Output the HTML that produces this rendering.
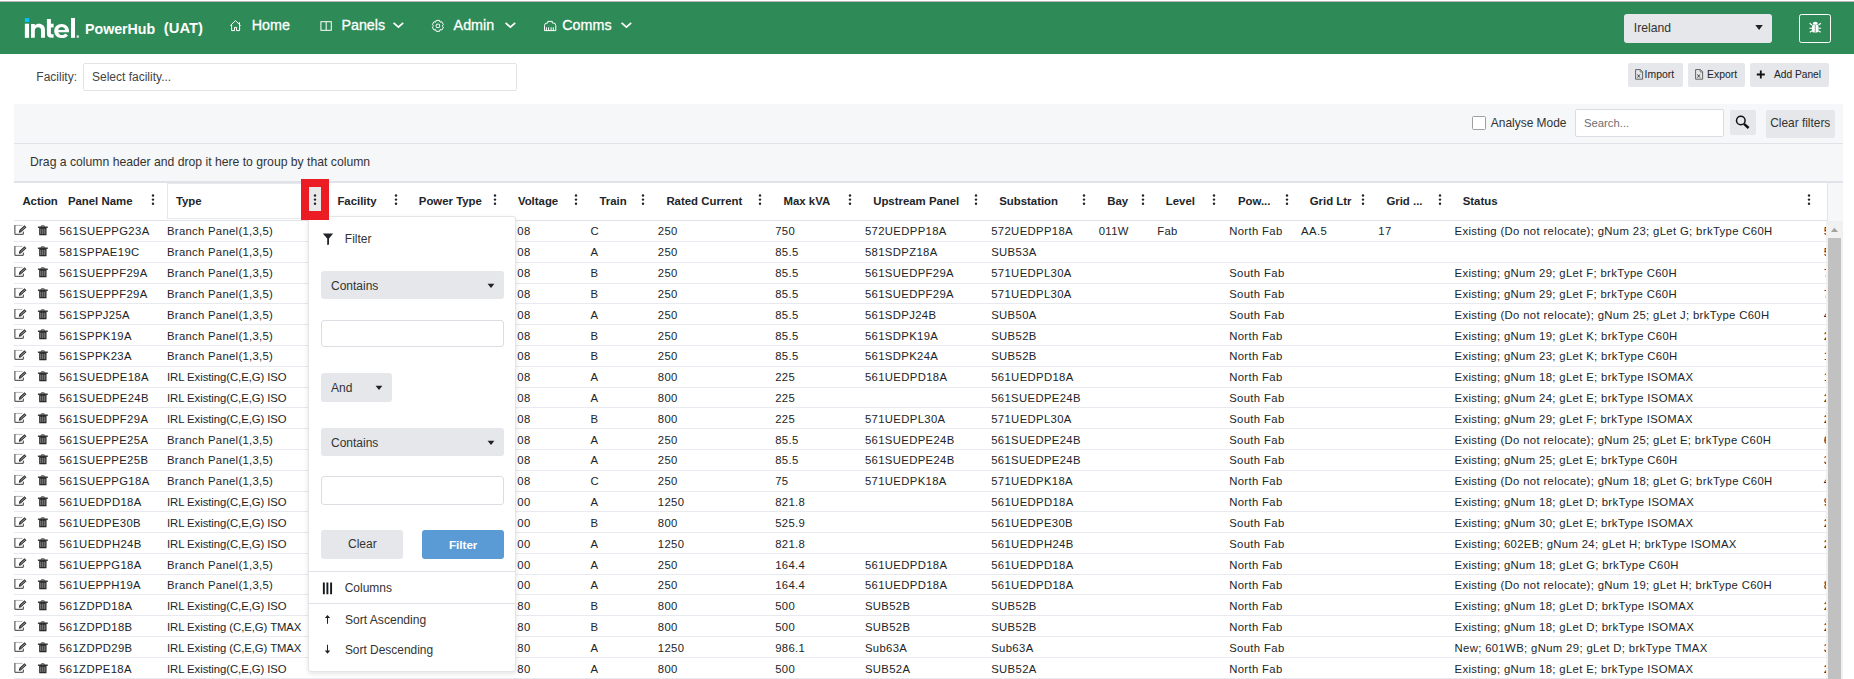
<!DOCTYPE html>
<html><head><meta charset="utf-8"><style>
html,body{margin:0;padding:0;width:1854px;height:679px;overflow:hidden;background:#fff;font-family:"Liberation Sans",sans-serif;}
.t{position:absolute;white-space:nowrap;line-height:normal;}
.r{position:absolute;}
svg.r{overflow:visible}
</style></head><body>
<div class="r" style="left:0.00px;top:0.00px;width:1854.00px;height:1.00px;background:#fff"></div>
<div class="r" style="left:0.00px;top:1.00px;width:1854.00px;height:1.00px;background:#b9b4b7"></div>
<div class="r" style="left:0.00px;top:2.00px;width:1854.00px;height:51.50px;background:#2e8b57"></div>
<svg class="r" style="left:20px;top:12px" width="64" height="30" viewBox="0 0 64 30"><rect x="4.86" y="6.18" width="4.19" height="3.76" fill="#00c7fd"/><rect x="4.86" y="11.7" width="4.19" height="14.14" fill="#fff"/><path d="M11 25.84 V12 H14.8 V13.4 C15.7 12.3 17.1 11.7 18.7 11.7 C22.4 11.7 24.96 13.9 24.96 17.8 V25.84 H21 V18.6 C21 16.4 20 15.3 18.1 15.3 C16.1 15.3 14.8 16.7 14.8 18.9 V25.84 Z" fill="#fff"/><path d="M26.9 7.07 H30.9 V11.7 H33.6 V15.4 H30.9 V21.2 C30.9 22 31.3 22.3 32.2 22.3 H33.6 V25.84 H31.8 C28.4 25.84 26.9 24.4 26.9 21.3 Z" fill="#fff"/><path fill-rule="evenodd" d="M49 20.3 H38.3 C38.7 22.2 40.1 23.1 41.9 23.1 C43.3 23.1 44.4 22.6 45.2 21.6 L48.1 23.5 C46.8 25.1 44.6 26.06 41.9 26.06 C37.3 26.06 34.2 23.2 34.2 19 C34.2 14.8 37.3 11.9 41.6 11.9 C45.9 11.9 49 14.8 49 19 Z M38.3 17.9 H45.1 C44.7 16.1 43.4 15.1 41.7 15.1 C40 15.1 38.7 16.1 38.3 17.9 Z" fill="#fff"/><rect x="51" y="5.96" width="4" height="19.88" fill="#fff"/><rect x="56.6" y="23.3" width="2.3" height="2.5" fill="#cfe3d6"/></svg>
<div class="t" style="left:85.00px;top:20.54px;font-size:14.2px;font-weight:700;color:#fff;">PowerHub</div>
<div class="t" style="left:163.80px;top:20.20px;font-size:14.8px;font-weight:700;color:#fff;">(UAT)</div>
<div class="t" style="left:251.80px;top:17.05px;font-size:14.3px;font-weight:400;color:#fff;-webkit-text-stroke:0.3px #fff">Home</div>
<svg class="r" style="left:226px;top:16px" width="20" height="20"><path d="M4.3 9.6 L9.4 4.6 L14.6 9.6 M5.6 8.4 V14.6 H8.5 V11.4 H10.5 V14.6 H13.6 V8.4 M13.5 8 V6.2" stroke="#fff" fill="none" stroke-width="1" stroke-linejoin="round"/></svg>
<div class="t" style="left:341.40px;top:17.05px;font-size:14.3px;font-weight:400;color:#fff;-webkit-text-stroke:0.3px #fff">Panels</div>
<svg class="r" style="left:316px;top:16px" width="20" height="20"><rect x="4.9" y="5.7" width="10.4" height="8.6" stroke="#fff" fill="none" stroke-width="1"/><path d="M10.2 5.7 V14.3" stroke="#fff" fill="none" stroke-width="1"/></svg>
<div class="t" style="left:453.60px;top:17.05px;font-size:14.3px;font-weight:400;color:#fff;-webkit-text-stroke:0.3px #fff">Admin</div>
<svg class="r" style="left:428px;top:16px" width="20" height="20"><path d="M7.73 6.14 L8.19 4.42 L11.55 4.42 L12.01 6.14 L12.03 6.15 L13.74 5.69 L15.43 8.61 L14.17 9.85 L14.17 9.89 L15.43 11.13 L13.74 14.05 L12.03 13.59 L12.01 13.60 L11.55 15.32 L8.19 15.32 L7.73 13.60 L7.71 13.59 L6.00 14.05 L4.31 11.13 L5.57 9.89 L5.57 9.85 L4.31 8.61 L6.00 5.69 L7.71 6.15 Z" stroke="#fff" fill="none" stroke-width="1" stroke-linejoin="round"/><rect x="8.2" y="8.2" width="3.4" height="3.4" rx="0.8" stroke="#fff" fill="none" stroke-width="1"/></svg>
<div class="t" style="left:562.30px;top:17.05px;font-size:14.3px;font-weight:400;color:#fff;-webkit-text-stroke:0.3px #fff">Comms</div>
<svg class="r" style="left:540px;top:16px" width="20" height="20"><path d="M4.5 14.6 V9.6 Q4.5 7 7.1 7 H7.8 V5.4 H12.3 V7 H13.2 Q15.8 7 15.8 9.6 V14.6 Z M6.4 11.3 V14.6 M8.6 11.3 V14.6 M11.1 11.3 V14.6 M13.3 11.3 V14.6" stroke="#fff" fill="none" stroke-width="1"/></svg>
<svg class="r" style="left:391.6px;top:20px" width="14" height="10"><path d="M1.6 2.8 L6.4 7.2 L11.2 2.8" stroke="#fff" stroke-width="1.7" fill="none"/></svg>
<svg class="r" style="left:504.4px;top:20px" width="14" height="10"><path d="M1.6 2.8 L6.4 7.2 L11.2 2.8" stroke="#fff" stroke-width="1.7" fill="none"/></svg>
<svg class="r" style="left:619.5px;top:20px" width="14" height="10"><path d="M1.6 2.8 L6.4 7.2 L11.2 2.8" stroke="#fff" stroke-width="1.7" fill="none"/></svg>
<div class="r" style="left:1624.00px;top:14.20px;width:147.80px;height:28.40px;background:#e5e7ea;border-radius:3px"></div>
<div class="t" style="left:1633.80px;top:21.26px;font-size:12.2px;font-weight:400;color:#333;">Ireland</div>
<svg class="r" style="left:1754px;top:24px" width="10" height="8"><path d="M1.3 0.9 H8.8 L5.05 6 Z" fill="#222"/></svg>
<div class="r" style="left:1799.10px;top:14.20px;width:31.90px;height:28.50px;border:1.2px solid #fff;border-radius:2.5px;box-sizing:border-box"></div>
<svg class="r" style="left:1807px;top:19px" width="16" height="16" viewBox="0 0 16 16"><path d="M5.8 5 A2.5 2.3 0 0 1 10.8 5 Z" fill="#fff"/><rect x="5" y="5.3" width="6.5" height="8.3" rx="2.2" fill="#fff"/><path d="M8.25 6 V13.2" stroke="#2e8b57" stroke-width="0.7"/><path d="M2.6 4.2 L5 6 M13.9 4.2 L11.5 6 M2.4 9.3 H5 M14.1 9.3 H11.5 M2.8 13.3 L5.2 11.8 M13.7 13.3 L11.3 11.8" stroke="#fff" stroke-width="1.1"/></svg>
<div class="t" style="left:36.30px;top:70.44px;font-size:12px;font-weight:400;color:#444;">Facility:</div>
<div class="r" style="left:83.40px;top:63.30px;width:433.60px;height:28.20px;border:1px solid #e2e4e7;border-radius:2px;box-sizing:border-box;background:#fff"></div>
<div class="t" style="left:92.00px;top:70.44px;font-size:12px;font-weight:400;color:#444;">Select facility...</div>
<div class="r" style="left:1628.20px;top:63.20px;width:54.60px;height:24.20px;background:#e5e7ea;border-radius:2px"></div>
<div class="r" style="left:1688.20px;top:63.20px;width:56.60px;height:24.20px;background:#e5e7ea;border-radius:2px"></div>
<div class="r" style="left:1750.10px;top:63.20px;width:78.90px;height:24.20px;background:#e5e7ea;border-radius:2px"></div>
<div class="t" style="left:1644.60px;top:68.78px;font-size:10.4px;font-weight:400;color:#222;">Import</div>
<div class="t" style="left:1707.00px;top:68.78px;font-size:10.4px;font-weight:400;color:#222;">Export</div>
<div class="t" style="left:1774.00px;top:68.97px;font-size:10.2px;font-weight:400;color:#222;">Add Panel</div>
<svg class="r" style="left:1635px;top:69px" width="9" height="11"><path d="M0.6 0.6 H5.4 L7.6 2.8 V10.2 H0.6 Z" stroke="#555" stroke-width="0.9" fill="none"/><path d="M5.2 0.6 V3 H7.6" stroke="#555" stroke-width="0.7" fill="none"/><path d="M2.4 5.4 L5 8.6 M5 5.4 L2.4 8.6" stroke="#333" stroke-width="0.9"/></svg>
<svg class="r" style="left:1695.2px;top:69px" width="9" height="11"><path d="M0.6 0.6 H5.4 L7.6 2.8 V10.2 H0.6 Z" stroke="#555" stroke-width="0.9" fill="none"/><path d="M5.2 0.6 V3 H7.6" stroke="#555" stroke-width="0.7" fill="none"/><path d="M2.4 5.4 L5 8.6 M5 5.4 L2.4 8.6" stroke="#333" stroke-width="0.9"/></svg>
<svg class="r" style="left:1756px;top:69.6px" width="10" height="9"><path d="M4.8 0.6 V8.4 M0.8 4.5 H8.8" stroke="#111" stroke-width="1.8"/></svg>
<div class="r" style="left:14.00px;top:104.00px;width:1829.00px;height:39.50px;background:#f6f7f9"></div>
<div class="r" style="left:14.00px;top:143.00px;width:1829.00px;height:1.00px;background:#dfe2e6"></div>
<div class="r" style="left:14.00px;top:144.00px;width:1829.00px;height:38.00px;background:#f6f7f9"></div>
<div class="r" style="left:14.00px;top:181.00px;width:1829.00px;height:1.50px;background:#dfe2e6"></div>
<div class="r" style="left:1472.20px;top:116.30px;width:14.20px;height:13.50px;border:1px solid #a0a0a0;border-radius:1.5px;box-sizing:border-box;background:#fff"></div>
<div class="t" style="left:1490.80px;top:116.08px;font-size:11.95px;font-weight:400;color:#333;">Analyse Mode</div>
<div class="r" style="left:1575.30px;top:109.20px;width:148.40px;height:28.30px;border:1px solid #dadde1;border-radius:2px;box-sizing:border-box;background:#fff"></div>
<div class="t" style="left:1584.00px;top:116.67px;font-size:11.3px;font-weight:400;color:#6c6f73;">Search...</div>
<div class="r" style="left:1730.00px;top:110.00px;width:25.80px;height:25.40px;background:#e5e7ea;border-radius:2px"></div>
<svg class="r" style="left:1734px;top:114px" width="18" height="18"><circle cx="6.8" cy="6.5" r="4.3" stroke="#111" stroke-width="1.5" fill="none"/><path d="M10 9.8 L14.6 14" stroke="#111" stroke-width="2.4"/></svg>
<div class="r" style="left:1766.00px;top:109.50px;width:68.60px;height:28.10px;background:#e5e7ea;border-radius:2px"></div>
<div class="t" style="left:1770.20px;top:116.13px;font-size:11.9px;font-weight:400;color:#333;">Clear filters</div>
<div class="t" style="left:30.00px;top:155.46px;font-size:12.2px;font-weight:400;color:#333;">Drag a column header and drop it here to group by that column</div>
<div class="r" style="left:14.00px;top:182.50px;width:1812.60px;height:38.00px;background:#fff"></div>
<div class="r" style="left:1826.60px;top:182.50px;width:16.40px;height:38.00px;background:#f6f7f9;border-left:1px solid #e1e4e8;box-sizing:border-box"></div>
<div class="r" style="left:14.00px;top:220.00px;width:1812.60px;height:1.00px;background:#dfe2e6"></div>
<div class="r" style="left:167.20px;top:183.20px;width:140.00px;height:35.60px;border:1.5px solid #e6e8ea;border-right:none;box-sizing:border-box"></div>
<div class="t" style="left:22.40px;top:194.68px;font-size:11.4px;font-weight:700;color:#212529;">Action</div>
<div class="t" style="left:67.90px;top:194.68px;font-size:11.4px;font-weight:700;color:#212529;">Panel Name</div>
<svg class="r" style="left:149.90px;top:191px" width="6" height="16"><circle cx="3" cy="4.5" r="1.2" fill="#212529"/><circle cx="3" cy="8.6" r="1.2" fill="#212529"/><circle cx="3" cy="12.7" r="1.2" fill="#212529"/></svg>
<div class="t" style="left:175.90px;top:194.68px;font-size:11.4px;font-weight:700;color:#212529;">Type</div>
<svg class="r" style="left:311.50px;top:191px" width="6" height="16"><circle cx="3" cy="4.5" r="1.2" fill="#212529"/><circle cx="3" cy="8.6" r="1.2" fill="#212529"/><circle cx="3" cy="12.7" r="1.2" fill="#212529"/></svg>
<div class="t" style="left:337.40px;top:194.68px;font-size:11.4px;font-weight:700;color:#212529;">Facility</div>
<svg class="r" style="left:392.50px;top:191px" width="6" height="16"><circle cx="3" cy="4.5" r="1.2" fill="#212529"/><circle cx="3" cy="8.6" r="1.2" fill="#212529"/><circle cx="3" cy="12.7" r="1.2" fill="#212529"/></svg>
<div class="t" style="left:418.80px;top:194.68px;font-size:11.4px;font-weight:700;color:#212529;">Power Type</div>
<svg class="r" style="left:491.80px;top:191px" width="6" height="16"><circle cx="3" cy="4.5" r="1.2" fill="#212529"/><circle cx="3" cy="8.6" r="1.2" fill="#212529"/><circle cx="3" cy="12.7" r="1.2" fill="#212529"/></svg>
<div class="t" style="left:517.90px;top:194.68px;font-size:11.4px;font-weight:700;color:#212529;">Voltage</div>
<svg class="r" style="left:572.70px;top:191px" width="6" height="16"><circle cx="3" cy="4.5" r="1.2" fill="#212529"/><circle cx="3" cy="8.6" r="1.2" fill="#212529"/><circle cx="3" cy="12.7" r="1.2" fill="#212529"/></svg>
<div class="t" style="left:599.40px;top:194.68px;font-size:11.4px;font-weight:700;color:#212529;">Train</div>
<svg class="r" style="left:640.30px;top:191px" width="6" height="16"><circle cx="3" cy="4.5" r="1.2" fill="#212529"/><circle cx="3" cy="8.6" r="1.2" fill="#212529"/><circle cx="3" cy="12.7" r="1.2" fill="#212529"/></svg>
<div class="t" style="left:666.40px;top:194.68px;font-size:11.4px;font-weight:700;color:#212529;">Rated Current</div>
<svg class="r" style="left:757.20px;top:191px" width="6" height="16"><circle cx="3" cy="4.5" r="1.2" fill="#212529"/><circle cx="3" cy="8.6" r="1.2" fill="#212529"/><circle cx="3" cy="12.7" r="1.2" fill="#212529"/></svg>
<div class="t" style="left:783.50px;top:194.68px;font-size:11.4px;font-weight:700;color:#212529;">Max kVA</div>
<svg class="r" style="left:847.00px;top:191px" width="6" height="16"><circle cx="3" cy="4.5" r="1.2" fill="#212529"/><circle cx="3" cy="8.6" r="1.2" fill="#212529"/><circle cx="3" cy="12.7" r="1.2" fill="#212529"/></svg>
<div class="t" style="left:873.20px;top:194.68px;font-size:11.4px;font-weight:700;color:#212529;">Upstream Panel</div>
<svg class="r" style="left:973.10px;top:191px" width="6" height="16"><circle cx="3" cy="4.5" r="1.2" fill="#212529"/><circle cx="3" cy="8.6" r="1.2" fill="#212529"/><circle cx="3" cy="12.7" r="1.2" fill="#212529"/></svg>
<div class="t" style="left:999.20px;top:194.68px;font-size:11.4px;font-weight:700;color:#212529;">Substation</div>
<svg class="r" style="left:1081.30px;top:191px" width="6" height="16"><circle cx="3" cy="4.5" r="1.2" fill="#212529"/><circle cx="3" cy="8.6" r="1.2" fill="#212529"/><circle cx="3" cy="12.7" r="1.2" fill="#212529"/></svg>
<div class="t" style="left:1107.20px;top:194.68px;font-size:11.4px;font-weight:700;color:#212529;">Bay</div>
<svg class="r" style="left:1139.90px;top:191px" width="6" height="16"><circle cx="3" cy="4.5" r="1.2" fill="#212529"/><circle cx="3" cy="8.6" r="1.2" fill="#212529"/><circle cx="3" cy="12.7" r="1.2" fill="#212529"/></svg>
<div class="t" style="left:1165.80px;top:194.68px;font-size:11.4px;font-weight:700;color:#212529;">Level</div>
<svg class="r" style="left:1211.40px;top:191px" width="6" height="16"><circle cx="3" cy="4.5" r="1.2" fill="#212529"/><circle cx="3" cy="8.6" r="1.2" fill="#212529"/><circle cx="3" cy="12.7" r="1.2" fill="#212529"/></svg>
<div class="t" style="left:1237.90px;top:194.68px;font-size:11.4px;font-weight:700;color:#212529;">Pow...</div>
<svg class="r" style="left:1283.60px;top:191px" width="6" height="16"><circle cx="3" cy="4.5" r="1.2" fill="#212529"/><circle cx="3" cy="8.6" r="1.2" fill="#212529"/><circle cx="3" cy="12.7" r="1.2" fill="#212529"/></svg>
<div class="t" style="left:1309.70px;top:194.68px;font-size:11.4px;font-weight:700;color:#212529;">Grid Ltr</div>
<svg class="r" style="left:1360.30px;top:191px" width="6" height="16"><circle cx="3" cy="4.5" r="1.2" fill="#212529"/><circle cx="3" cy="8.6" r="1.2" fill="#212529"/><circle cx="3" cy="12.7" r="1.2" fill="#212529"/></svg>
<div class="t" style="left:1386.40px;top:194.68px;font-size:11.4px;font-weight:700;color:#212529;">Grid ...</div>
<svg class="r" style="left:1436.80px;top:191px" width="6" height="16"><circle cx="3" cy="4.5" r="1.2" fill="#212529"/><circle cx="3" cy="8.6" r="1.2" fill="#212529"/><circle cx="3" cy="12.7" r="1.2" fill="#212529"/></svg>
<div class="t" style="left:1462.70px;top:194.68px;font-size:11.4px;font-weight:700;color:#212529;">Status</div>
<svg class="r" style="left:1805.60px;top:191px" width="6" height="16"><circle cx="3" cy="4.5" r="1.2" fill="#212529"/><circle cx="3" cy="8.6" r="1.2" fill="#212529"/><circle cx="3" cy="12.7" r="1.2" fill="#212529"/></svg>
<div class="r" style="left:0;top:0;width:1826.2px;height:679px;overflow:hidden">
<div class="r" style="left:14.00px;top:241.00px;width:1812.20px;height:1.00px;background:#e8eaef"></div>
<svg class="r" style="left:14px;top:224.30px" width="14" height="12" viewBox="0 0 14 12"><path d="M1.3 1.4 H8.6" stroke="#b5b5b5" stroke-width="1" fill="none"/><path d="M0.9 1 V10.3 H9.3 V7.6" stroke="#3a3a3a" stroke-width="1" fill="none"/><path d="M6.3 7.1 L11.5 2.3" stroke="#222" stroke-width="2.7"/><path d="M6.7 6.7 L11.1 2.7" stroke="#d4d4d4" stroke-width="0.8"/><path d="M4.9 8.7 L5.3 6.1 L7.4 8.2 Z" fill="#222"/></svg>
<svg class="r" style="left:37px;top:224.30px" width="12" height="13" viewBox="0 0 12 13"><path d="M0.9 3.2 H10.8" stroke="#1e1e1e" stroke-width="1.3"/><path d="M4.1 2.8 C4.1 1.3 7.6 1.3 7.6 2.8" stroke="#333" stroke-width="1.1" fill="none"/><rect x="2.2" y="3.4" width="7.3" height="7.9" rx="0.6" fill="#1e1e1e"/><path d="M3.85 4.6 V10.2 M5.85 4.6 V10.2 M7.85 4.6 V10.2" stroke="#a8a8a8" stroke-width="0.9"/></svg>
<div class="t" style="left:59.20px;top:225.47px;font-size:11.3px;font-weight:400;color:#212529;letter-spacing:0.36px">561SUEPPG23A</div>
<div class="t" style="left:167.00px;top:225.47px;font-size:11.3px;font-weight:400;color:#212529;letter-spacing:0.3px">Branch Panel(1,3,5)</div>
<div class="t" style="left:517.30px;top:225.47px;font-size:11.3px;font-weight:400;color:#212529;letter-spacing:0.36px">08</div>
<div class="t" style="left:590.40px;top:225.47px;font-size:11.3px;font-weight:400;color:#212529;letter-spacing:0.36px">C</div>
<div class="t" style="left:657.80px;top:225.47px;font-size:11.3px;font-weight:400;color:#212529;letter-spacing:0.36px">250</div>
<div class="t" style="left:775.20px;top:225.47px;font-size:11.3px;font-weight:400;color:#212529;letter-spacing:0.36px">750</div>
<div class="t" style="left:864.90px;top:225.47px;font-size:11.3px;font-weight:400;color:#212529;letter-spacing:0.36px">572UEDPP18A</div>
<div class="t" style="left:991.20px;top:225.47px;font-size:11.3px;font-weight:400;color:#212529;letter-spacing:0.36px">572UEDPP18A</div>
<div class="t" style="left:1098.70px;top:225.47px;font-size:11.3px;font-weight:400;color:#212529;letter-spacing:0.36px">011W</div>
<div class="t" style="left:1157.20px;top:225.47px;font-size:11.3px;font-weight:400;color:#212529;letter-spacing:0.36px">Fab</div>
<div class="t" style="left:1229.20px;top:225.47px;font-size:11.3px;font-weight:400;color:#212529;letter-spacing:0.36px">North Fab</div>
<div class="t" style="left:1301.10px;top:225.47px;font-size:11.3px;font-weight:400;color:#212529;letter-spacing:0.36px">AA.5</div>
<div class="t" style="left:1378.30px;top:225.47px;font-size:11.3px;font-weight:400;color:#212529;letter-spacing:0.36px">17</div>
<div class="t" style="left:1454.50px;top:225.47px;font-size:11.3px;font-weight:400;color:#212529;letter-spacing:0.36px">Existing (Do not relocate); gNum 23; gLet G; brkType C60H</div>
<div class="t" style="left:1823.70px;top:225.47px;font-size:11.3px;font-weight:400;color:#212529;letter-spacing:0.36px">5</div>
<div class="r" style="left:14.00px;top:262.00px;width:1812.20px;height:1.00px;background:#e8eaef"></div>
<svg class="r" style="left:14px;top:245.12px" width="14" height="12" viewBox="0 0 14 12"><path d="M1.3 1.4 H8.6" stroke="#b5b5b5" stroke-width="1" fill="none"/><path d="M0.9 1 V10.3 H9.3 V7.6" stroke="#3a3a3a" stroke-width="1" fill="none"/><path d="M6.3 7.1 L11.5 2.3" stroke="#222" stroke-width="2.7"/><path d="M6.7 6.7 L11.1 2.7" stroke="#d4d4d4" stroke-width="0.8"/><path d="M4.9 8.7 L5.3 6.1 L7.4 8.2 Z" fill="#222"/></svg>
<svg class="r" style="left:37px;top:245.12px" width="12" height="13" viewBox="0 0 12 13"><path d="M0.9 3.2 H10.8" stroke="#1e1e1e" stroke-width="1.3"/><path d="M4.1 2.8 C4.1 1.3 7.6 1.3 7.6 2.8" stroke="#333" stroke-width="1.1" fill="none"/><rect x="2.2" y="3.4" width="7.3" height="7.9" rx="0.6" fill="#1e1e1e"/><path d="M3.85 4.6 V10.2 M5.85 4.6 V10.2 M7.85 4.6 V10.2" stroke="#a8a8a8" stroke-width="0.9"/></svg>
<div class="t" style="left:59.20px;top:246.29px;font-size:11.3px;font-weight:400;color:#212529;letter-spacing:0.36px">581SPPAE19C</div>
<div class="t" style="left:167.00px;top:246.29px;font-size:11.3px;font-weight:400;color:#212529;letter-spacing:0.3px">Branch Panel(1,3,5)</div>
<div class="t" style="left:517.30px;top:246.29px;font-size:11.3px;font-weight:400;color:#212529;letter-spacing:0.36px">08</div>
<div class="t" style="left:590.40px;top:246.29px;font-size:11.3px;font-weight:400;color:#212529;letter-spacing:0.36px">A</div>
<div class="t" style="left:657.80px;top:246.29px;font-size:11.3px;font-weight:400;color:#212529;letter-spacing:0.36px">250</div>
<div class="t" style="left:775.20px;top:246.29px;font-size:11.3px;font-weight:400;color:#212529;letter-spacing:0.36px">85.5</div>
<div class="t" style="left:864.90px;top:246.29px;font-size:11.3px;font-weight:400;color:#212529;letter-spacing:0.36px">581SDPZ18A</div>
<div class="t" style="left:991.20px;top:246.29px;font-size:11.3px;font-weight:400;color:#212529;letter-spacing:0.36px">SUB53A</div>
<div class="t" style="left:1823.70px;top:246.29px;font-size:11.3px;font-weight:400;color:#212529;letter-spacing:0.36px">5</div>
<div class="r" style="left:14.00px;top:283.00px;width:1812.20px;height:1.00px;background:#e8eaef"></div>
<svg class="r" style="left:14px;top:265.94px" width="14" height="12" viewBox="0 0 14 12"><path d="M1.3 1.4 H8.6" stroke="#b5b5b5" stroke-width="1" fill="none"/><path d="M0.9 1 V10.3 H9.3 V7.6" stroke="#3a3a3a" stroke-width="1" fill="none"/><path d="M6.3 7.1 L11.5 2.3" stroke="#222" stroke-width="2.7"/><path d="M6.7 6.7 L11.1 2.7" stroke="#d4d4d4" stroke-width="0.8"/><path d="M4.9 8.7 L5.3 6.1 L7.4 8.2 Z" fill="#222"/></svg>
<svg class="r" style="left:37px;top:265.94px" width="12" height="13" viewBox="0 0 12 13"><path d="M0.9 3.2 H10.8" stroke="#1e1e1e" stroke-width="1.3"/><path d="M4.1 2.8 C4.1 1.3 7.6 1.3 7.6 2.8" stroke="#333" stroke-width="1.1" fill="none"/><rect x="2.2" y="3.4" width="7.3" height="7.9" rx="0.6" fill="#1e1e1e"/><path d="M3.85 4.6 V10.2 M5.85 4.6 V10.2 M7.85 4.6 V10.2" stroke="#a8a8a8" stroke-width="0.9"/></svg>
<div class="t" style="left:59.20px;top:267.11px;font-size:11.3px;font-weight:400;color:#212529;letter-spacing:0.36px">561SUEPPF29A</div>
<div class="t" style="left:167.00px;top:267.11px;font-size:11.3px;font-weight:400;color:#212529;letter-spacing:0.3px">Branch Panel(1,3,5)</div>
<div class="t" style="left:517.30px;top:267.11px;font-size:11.3px;font-weight:400;color:#212529;letter-spacing:0.36px">08</div>
<div class="t" style="left:590.40px;top:267.11px;font-size:11.3px;font-weight:400;color:#212529;letter-spacing:0.36px">B</div>
<div class="t" style="left:657.80px;top:267.11px;font-size:11.3px;font-weight:400;color:#212529;letter-spacing:0.36px">250</div>
<div class="t" style="left:775.20px;top:267.11px;font-size:11.3px;font-weight:400;color:#212529;letter-spacing:0.36px">85.5</div>
<div class="t" style="left:864.90px;top:267.11px;font-size:11.3px;font-weight:400;color:#212529;letter-spacing:0.36px">561SUEDPF29A</div>
<div class="t" style="left:991.20px;top:267.11px;font-size:11.3px;font-weight:400;color:#212529;letter-spacing:0.36px">571UEDPL30A</div>
<div class="t" style="left:1229.20px;top:267.11px;font-size:11.3px;font-weight:400;color:#212529;letter-spacing:0.36px">South Fab</div>
<div class="t" style="left:1454.50px;top:267.11px;font-size:11.3px;font-weight:400;color:#212529;letter-spacing:0.36px">Existing; gNum 29; gLet F; brkType C60H</div>
<div class="t" style="left:1823.70px;top:267.11px;font-size:11.3px;font-weight:400;color:#212529;letter-spacing:0.36px">7</div>
<div class="r" style="left:14.00px;top:303.00px;width:1812.20px;height:1.00px;background:#e8eaef"></div>
<svg class="r" style="left:14px;top:286.76px" width="14" height="12" viewBox="0 0 14 12"><path d="M1.3 1.4 H8.6" stroke="#b5b5b5" stroke-width="1" fill="none"/><path d="M0.9 1 V10.3 H9.3 V7.6" stroke="#3a3a3a" stroke-width="1" fill="none"/><path d="M6.3 7.1 L11.5 2.3" stroke="#222" stroke-width="2.7"/><path d="M6.7 6.7 L11.1 2.7" stroke="#d4d4d4" stroke-width="0.8"/><path d="M4.9 8.7 L5.3 6.1 L7.4 8.2 Z" fill="#222"/></svg>
<svg class="r" style="left:37px;top:286.76px" width="12" height="13" viewBox="0 0 12 13"><path d="M0.9 3.2 H10.8" stroke="#1e1e1e" stroke-width="1.3"/><path d="M4.1 2.8 C4.1 1.3 7.6 1.3 7.6 2.8" stroke="#333" stroke-width="1.1" fill="none"/><rect x="2.2" y="3.4" width="7.3" height="7.9" rx="0.6" fill="#1e1e1e"/><path d="M3.85 4.6 V10.2 M5.85 4.6 V10.2 M7.85 4.6 V10.2" stroke="#a8a8a8" stroke-width="0.9"/></svg>
<div class="t" style="left:59.20px;top:287.93px;font-size:11.3px;font-weight:400;color:#212529;letter-spacing:0.36px">561SUEPPF29A</div>
<div class="t" style="left:167.00px;top:287.93px;font-size:11.3px;font-weight:400;color:#212529;letter-spacing:0.3px">Branch Panel(1,3,5)</div>
<div class="t" style="left:517.30px;top:287.93px;font-size:11.3px;font-weight:400;color:#212529;letter-spacing:0.36px">08</div>
<div class="t" style="left:590.40px;top:287.93px;font-size:11.3px;font-weight:400;color:#212529;letter-spacing:0.36px">B</div>
<div class="t" style="left:657.80px;top:287.93px;font-size:11.3px;font-weight:400;color:#212529;letter-spacing:0.36px">250</div>
<div class="t" style="left:775.20px;top:287.93px;font-size:11.3px;font-weight:400;color:#212529;letter-spacing:0.36px">85.5</div>
<div class="t" style="left:864.90px;top:287.93px;font-size:11.3px;font-weight:400;color:#212529;letter-spacing:0.36px">561SUEDPF29A</div>
<div class="t" style="left:991.20px;top:287.93px;font-size:11.3px;font-weight:400;color:#212529;letter-spacing:0.36px">571UEDPL30A</div>
<div class="t" style="left:1229.20px;top:287.93px;font-size:11.3px;font-weight:400;color:#212529;letter-spacing:0.36px">South Fab</div>
<div class="t" style="left:1454.50px;top:287.93px;font-size:11.3px;font-weight:400;color:#212529;letter-spacing:0.36px">Existing; gNum 29; gLet F; brkType C60H</div>
<div class="t" style="left:1823.70px;top:287.93px;font-size:11.3px;font-weight:400;color:#212529;letter-spacing:0.36px">7</div>
<div class="r" style="left:14.00px;top:324.00px;width:1812.20px;height:1.00px;background:#e8eaef"></div>
<svg class="r" style="left:14px;top:307.58px" width="14" height="12" viewBox="0 0 14 12"><path d="M1.3 1.4 H8.6" stroke="#b5b5b5" stroke-width="1" fill="none"/><path d="M0.9 1 V10.3 H9.3 V7.6" stroke="#3a3a3a" stroke-width="1" fill="none"/><path d="M6.3 7.1 L11.5 2.3" stroke="#222" stroke-width="2.7"/><path d="M6.7 6.7 L11.1 2.7" stroke="#d4d4d4" stroke-width="0.8"/><path d="M4.9 8.7 L5.3 6.1 L7.4 8.2 Z" fill="#222"/></svg>
<svg class="r" style="left:37px;top:307.58px" width="12" height="13" viewBox="0 0 12 13"><path d="M0.9 3.2 H10.8" stroke="#1e1e1e" stroke-width="1.3"/><path d="M4.1 2.8 C4.1 1.3 7.6 1.3 7.6 2.8" stroke="#333" stroke-width="1.1" fill="none"/><rect x="2.2" y="3.4" width="7.3" height="7.9" rx="0.6" fill="#1e1e1e"/><path d="M3.85 4.6 V10.2 M5.85 4.6 V10.2 M7.85 4.6 V10.2" stroke="#a8a8a8" stroke-width="0.9"/></svg>
<div class="t" style="left:59.20px;top:308.75px;font-size:11.3px;font-weight:400;color:#212529;letter-spacing:0.36px">561SPPJ25A</div>
<div class="t" style="left:167.00px;top:308.75px;font-size:11.3px;font-weight:400;color:#212529;letter-spacing:0.3px">Branch Panel(1,3,5)</div>
<div class="t" style="left:517.30px;top:308.75px;font-size:11.3px;font-weight:400;color:#212529;letter-spacing:0.36px">08</div>
<div class="t" style="left:590.40px;top:308.75px;font-size:11.3px;font-weight:400;color:#212529;letter-spacing:0.36px">A</div>
<div class="t" style="left:657.80px;top:308.75px;font-size:11.3px;font-weight:400;color:#212529;letter-spacing:0.36px">250</div>
<div class="t" style="left:775.20px;top:308.75px;font-size:11.3px;font-weight:400;color:#212529;letter-spacing:0.36px">85.5</div>
<div class="t" style="left:864.90px;top:308.75px;font-size:11.3px;font-weight:400;color:#212529;letter-spacing:0.36px">561SDPJ24B</div>
<div class="t" style="left:991.20px;top:308.75px;font-size:11.3px;font-weight:400;color:#212529;letter-spacing:0.36px">SUB50A</div>
<div class="t" style="left:1229.20px;top:308.75px;font-size:11.3px;font-weight:400;color:#212529;letter-spacing:0.36px">South Fab</div>
<div class="t" style="left:1454.50px;top:308.75px;font-size:11.3px;font-weight:400;color:#212529;letter-spacing:0.36px">Existing (Do not relocate); gNum 25; gLet J; brkType C60H</div>
<div class="t" style="left:1823.70px;top:308.75px;font-size:11.3px;font-weight:400;color:#212529;letter-spacing:0.36px">4</div>
<div class="r" style="left:14.00px;top:345.00px;width:1812.20px;height:1.00px;background:#e8eaef"></div>
<svg class="r" style="left:14px;top:328.40px" width="14" height="12" viewBox="0 0 14 12"><path d="M1.3 1.4 H8.6" stroke="#b5b5b5" stroke-width="1" fill="none"/><path d="M0.9 1 V10.3 H9.3 V7.6" stroke="#3a3a3a" stroke-width="1" fill="none"/><path d="M6.3 7.1 L11.5 2.3" stroke="#222" stroke-width="2.7"/><path d="M6.7 6.7 L11.1 2.7" stroke="#d4d4d4" stroke-width="0.8"/><path d="M4.9 8.7 L5.3 6.1 L7.4 8.2 Z" fill="#222"/></svg>
<svg class="r" style="left:37px;top:328.40px" width="12" height="13" viewBox="0 0 12 13"><path d="M0.9 3.2 H10.8" stroke="#1e1e1e" stroke-width="1.3"/><path d="M4.1 2.8 C4.1 1.3 7.6 1.3 7.6 2.8" stroke="#333" stroke-width="1.1" fill="none"/><rect x="2.2" y="3.4" width="7.3" height="7.9" rx="0.6" fill="#1e1e1e"/><path d="M3.85 4.6 V10.2 M5.85 4.6 V10.2 M7.85 4.6 V10.2" stroke="#a8a8a8" stroke-width="0.9"/></svg>
<div class="t" style="left:59.20px;top:329.57px;font-size:11.3px;font-weight:400;color:#212529;letter-spacing:0.36px">561SPPK19A</div>
<div class="t" style="left:167.00px;top:329.57px;font-size:11.3px;font-weight:400;color:#212529;letter-spacing:0.3px">Branch Panel(1,3,5)</div>
<div class="t" style="left:517.30px;top:329.57px;font-size:11.3px;font-weight:400;color:#212529;letter-spacing:0.36px">08</div>
<div class="t" style="left:590.40px;top:329.57px;font-size:11.3px;font-weight:400;color:#212529;letter-spacing:0.36px">B</div>
<div class="t" style="left:657.80px;top:329.57px;font-size:11.3px;font-weight:400;color:#212529;letter-spacing:0.36px">250</div>
<div class="t" style="left:775.20px;top:329.57px;font-size:11.3px;font-weight:400;color:#212529;letter-spacing:0.36px">85.5</div>
<div class="t" style="left:864.90px;top:329.57px;font-size:11.3px;font-weight:400;color:#212529;letter-spacing:0.36px">561SDPK19A</div>
<div class="t" style="left:991.20px;top:329.57px;font-size:11.3px;font-weight:400;color:#212529;letter-spacing:0.36px">SUB52B</div>
<div class="t" style="left:1229.20px;top:329.57px;font-size:11.3px;font-weight:400;color:#212529;letter-spacing:0.36px">North Fab</div>
<div class="t" style="left:1454.50px;top:329.57px;font-size:11.3px;font-weight:400;color:#212529;letter-spacing:0.36px">Existing; gNum 19; gLet K; brkType C60H</div>
<div class="t" style="left:1823.70px;top:329.57px;font-size:11.3px;font-weight:400;color:#212529;letter-spacing:0.36px">2</div>
<div class="r" style="left:14.00px;top:366.00px;width:1812.20px;height:1.00px;background:#e8eaef"></div>
<svg class="r" style="left:14px;top:349.22px" width="14" height="12" viewBox="0 0 14 12"><path d="M1.3 1.4 H8.6" stroke="#b5b5b5" stroke-width="1" fill="none"/><path d="M0.9 1 V10.3 H9.3 V7.6" stroke="#3a3a3a" stroke-width="1" fill="none"/><path d="M6.3 7.1 L11.5 2.3" stroke="#222" stroke-width="2.7"/><path d="M6.7 6.7 L11.1 2.7" stroke="#d4d4d4" stroke-width="0.8"/><path d="M4.9 8.7 L5.3 6.1 L7.4 8.2 Z" fill="#222"/></svg>
<svg class="r" style="left:37px;top:349.22px" width="12" height="13" viewBox="0 0 12 13"><path d="M0.9 3.2 H10.8" stroke="#1e1e1e" stroke-width="1.3"/><path d="M4.1 2.8 C4.1 1.3 7.6 1.3 7.6 2.8" stroke="#333" stroke-width="1.1" fill="none"/><rect x="2.2" y="3.4" width="7.3" height="7.9" rx="0.6" fill="#1e1e1e"/><path d="M3.85 4.6 V10.2 M5.85 4.6 V10.2 M7.85 4.6 V10.2" stroke="#a8a8a8" stroke-width="0.9"/></svg>
<div class="t" style="left:59.20px;top:350.39px;font-size:11.3px;font-weight:400;color:#212529;letter-spacing:0.36px">561SPPK23A</div>
<div class="t" style="left:167.00px;top:350.39px;font-size:11.3px;font-weight:400;color:#212529;letter-spacing:0.3px">Branch Panel(1,3,5)</div>
<div class="t" style="left:517.30px;top:350.39px;font-size:11.3px;font-weight:400;color:#212529;letter-spacing:0.36px">08</div>
<div class="t" style="left:590.40px;top:350.39px;font-size:11.3px;font-weight:400;color:#212529;letter-spacing:0.36px">B</div>
<div class="t" style="left:657.80px;top:350.39px;font-size:11.3px;font-weight:400;color:#212529;letter-spacing:0.36px">250</div>
<div class="t" style="left:775.20px;top:350.39px;font-size:11.3px;font-weight:400;color:#212529;letter-spacing:0.36px">85.5</div>
<div class="t" style="left:864.90px;top:350.39px;font-size:11.3px;font-weight:400;color:#212529;letter-spacing:0.36px">561SDPK24A</div>
<div class="t" style="left:991.20px;top:350.39px;font-size:11.3px;font-weight:400;color:#212529;letter-spacing:0.36px">SUB52B</div>
<div class="t" style="left:1229.20px;top:350.39px;font-size:11.3px;font-weight:400;color:#212529;letter-spacing:0.36px">North Fab</div>
<div class="t" style="left:1454.50px;top:350.39px;font-size:11.3px;font-weight:400;color:#212529;letter-spacing:0.36px">Existing; gNum 23; gLet K; brkType C60H</div>
<div class="t" style="left:1823.70px;top:350.39px;font-size:11.3px;font-weight:400;color:#212529;letter-spacing:0.36px">1</div>
<div class="r" style="left:14.00px;top:387.00px;width:1812.20px;height:1.00px;background:#e8eaef"></div>
<svg class="r" style="left:14px;top:370.04px" width="14" height="12" viewBox="0 0 14 12"><path d="M1.3 1.4 H8.6" stroke="#b5b5b5" stroke-width="1" fill="none"/><path d="M0.9 1 V10.3 H9.3 V7.6" stroke="#3a3a3a" stroke-width="1" fill="none"/><path d="M6.3 7.1 L11.5 2.3" stroke="#222" stroke-width="2.7"/><path d="M6.7 6.7 L11.1 2.7" stroke="#d4d4d4" stroke-width="0.8"/><path d="M4.9 8.7 L5.3 6.1 L7.4 8.2 Z" fill="#222"/></svg>
<svg class="r" style="left:37px;top:370.04px" width="12" height="13" viewBox="0 0 12 13"><path d="M0.9 3.2 H10.8" stroke="#1e1e1e" stroke-width="1.3"/><path d="M4.1 2.8 C4.1 1.3 7.6 1.3 7.6 2.8" stroke="#333" stroke-width="1.1" fill="none"/><rect x="2.2" y="3.4" width="7.3" height="7.9" rx="0.6" fill="#1e1e1e"/><path d="M3.85 4.6 V10.2 M5.85 4.6 V10.2 M7.85 4.6 V10.2" stroke="#a8a8a8" stroke-width="0.9"/></svg>
<div class="t" style="left:59.20px;top:371.21px;font-size:11.3px;font-weight:400;color:#212529;letter-spacing:0.36px">561SUEDPE18A</div>
<div class="t" style="left:167.00px;top:371.21px;font-size:11.3px;font-weight:400;color:#212529;letter-spacing:-0.05px">IRL Existing(C,E,G) ISO</div>
<div class="t" style="left:517.30px;top:371.21px;font-size:11.3px;font-weight:400;color:#212529;letter-spacing:0.36px">08</div>
<div class="t" style="left:590.40px;top:371.21px;font-size:11.3px;font-weight:400;color:#212529;letter-spacing:0.36px">A</div>
<div class="t" style="left:657.80px;top:371.21px;font-size:11.3px;font-weight:400;color:#212529;letter-spacing:0.36px">800</div>
<div class="t" style="left:775.20px;top:371.21px;font-size:11.3px;font-weight:400;color:#212529;letter-spacing:0.36px">225</div>
<div class="t" style="left:864.90px;top:371.21px;font-size:11.3px;font-weight:400;color:#212529;letter-spacing:0.36px">561UEDPD18A</div>
<div class="t" style="left:991.20px;top:371.21px;font-size:11.3px;font-weight:400;color:#212529;letter-spacing:0.36px">561UEDPD18A</div>
<div class="t" style="left:1229.20px;top:371.21px;font-size:11.3px;font-weight:400;color:#212529;letter-spacing:0.36px">North Fab</div>
<div class="t" style="left:1454.50px;top:371.21px;font-size:11.3px;font-weight:400;color:#212529;letter-spacing:0.36px">Existing; gNum 18; gLet E; brkType ISOMAX</div>
<div class="t" style="left:1823.70px;top:371.21px;font-size:11.3px;font-weight:400;color:#212529;letter-spacing:0.36px">1</div>
<div class="r" style="left:14.00px;top:407.00px;width:1812.20px;height:1.00px;background:#e8eaef"></div>
<svg class="r" style="left:14px;top:390.86px" width="14" height="12" viewBox="0 0 14 12"><path d="M1.3 1.4 H8.6" stroke="#b5b5b5" stroke-width="1" fill="none"/><path d="M0.9 1 V10.3 H9.3 V7.6" stroke="#3a3a3a" stroke-width="1" fill="none"/><path d="M6.3 7.1 L11.5 2.3" stroke="#222" stroke-width="2.7"/><path d="M6.7 6.7 L11.1 2.7" stroke="#d4d4d4" stroke-width="0.8"/><path d="M4.9 8.7 L5.3 6.1 L7.4 8.2 Z" fill="#222"/></svg>
<svg class="r" style="left:37px;top:390.86px" width="12" height="13" viewBox="0 0 12 13"><path d="M0.9 3.2 H10.8" stroke="#1e1e1e" stroke-width="1.3"/><path d="M4.1 2.8 C4.1 1.3 7.6 1.3 7.6 2.8" stroke="#333" stroke-width="1.1" fill="none"/><rect x="2.2" y="3.4" width="7.3" height="7.9" rx="0.6" fill="#1e1e1e"/><path d="M3.85 4.6 V10.2 M5.85 4.6 V10.2 M7.85 4.6 V10.2" stroke="#a8a8a8" stroke-width="0.9"/></svg>
<div class="t" style="left:59.20px;top:392.03px;font-size:11.3px;font-weight:400;color:#212529;letter-spacing:0.36px">561SUEDPE24B</div>
<div class="t" style="left:167.00px;top:392.03px;font-size:11.3px;font-weight:400;color:#212529;letter-spacing:-0.05px">IRL Existing(C,E,G) ISO</div>
<div class="t" style="left:517.30px;top:392.03px;font-size:11.3px;font-weight:400;color:#212529;letter-spacing:0.36px">08</div>
<div class="t" style="left:590.40px;top:392.03px;font-size:11.3px;font-weight:400;color:#212529;letter-spacing:0.36px">A</div>
<div class="t" style="left:657.80px;top:392.03px;font-size:11.3px;font-weight:400;color:#212529;letter-spacing:0.36px">800</div>
<div class="t" style="left:775.20px;top:392.03px;font-size:11.3px;font-weight:400;color:#212529;letter-spacing:0.36px">225</div>
<div class="t" style="left:991.20px;top:392.03px;font-size:11.3px;font-weight:400;color:#212529;letter-spacing:0.36px">561SUEDPE24B</div>
<div class="t" style="left:1229.20px;top:392.03px;font-size:11.3px;font-weight:400;color:#212529;letter-spacing:0.36px">South Fab</div>
<div class="t" style="left:1454.50px;top:392.03px;font-size:11.3px;font-weight:400;color:#212529;letter-spacing:0.36px">Existing; gNum 24; gLet E; brkType ISOMAX</div>
<div class="t" style="left:1823.70px;top:392.03px;font-size:11.3px;font-weight:400;color:#212529;letter-spacing:0.36px">2</div>
<div class="r" style="left:14.00px;top:428.00px;width:1812.20px;height:1.00px;background:#e8eaef"></div>
<svg class="r" style="left:14px;top:411.68px" width="14" height="12" viewBox="0 0 14 12"><path d="M1.3 1.4 H8.6" stroke="#b5b5b5" stroke-width="1" fill="none"/><path d="M0.9 1 V10.3 H9.3 V7.6" stroke="#3a3a3a" stroke-width="1" fill="none"/><path d="M6.3 7.1 L11.5 2.3" stroke="#222" stroke-width="2.7"/><path d="M6.7 6.7 L11.1 2.7" stroke="#d4d4d4" stroke-width="0.8"/><path d="M4.9 8.7 L5.3 6.1 L7.4 8.2 Z" fill="#222"/></svg>
<svg class="r" style="left:37px;top:411.68px" width="12" height="13" viewBox="0 0 12 13"><path d="M0.9 3.2 H10.8" stroke="#1e1e1e" stroke-width="1.3"/><path d="M4.1 2.8 C4.1 1.3 7.6 1.3 7.6 2.8" stroke="#333" stroke-width="1.1" fill="none"/><rect x="2.2" y="3.4" width="7.3" height="7.9" rx="0.6" fill="#1e1e1e"/><path d="M3.85 4.6 V10.2 M5.85 4.6 V10.2 M7.85 4.6 V10.2" stroke="#a8a8a8" stroke-width="0.9"/></svg>
<div class="t" style="left:59.20px;top:412.85px;font-size:11.3px;font-weight:400;color:#212529;letter-spacing:0.36px">561SUEDPF29A</div>
<div class="t" style="left:167.00px;top:412.85px;font-size:11.3px;font-weight:400;color:#212529;letter-spacing:-0.05px">IRL Existing(C,E,G) ISO</div>
<div class="t" style="left:517.30px;top:412.85px;font-size:11.3px;font-weight:400;color:#212529;letter-spacing:0.36px">08</div>
<div class="t" style="left:590.40px;top:412.85px;font-size:11.3px;font-weight:400;color:#212529;letter-spacing:0.36px">B</div>
<div class="t" style="left:657.80px;top:412.85px;font-size:11.3px;font-weight:400;color:#212529;letter-spacing:0.36px">800</div>
<div class="t" style="left:775.20px;top:412.85px;font-size:11.3px;font-weight:400;color:#212529;letter-spacing:0.36px">225</div>
<div class="t" style="left:864.90px;top:412.85px;font-size:11.3px;font-weight:400;color:#212529;letter-spacing:0.36px">571UEDPL30A</div>
<div class="t" style="left:991.20px;top:412.85px;font-size:11.3px;font-weight:400;color:#212529;letter-spacing:0.36px">571UEDPL30A</div>
<div class="t" style="left:1229.20px;top:412.85px;font-size:11.3px;font-weight:400;color:#212529;letter-spacing:0.36px">South Fab</div>
<div class="t" style="left:1454.50px;top:412.85px;font-size:11.3px;font-weight:400;color:#212529;letter-spacing:0.36px">Existing; gNum 29; gLet F; brkType ISOMAX</div>
<div class="t" style="left:1823.70px;top:412.85px;font-size:11.3px;font-weight:400;color:#212529;letter-spacing:0.36px">2</div>
<div class="r" style="left:14.00px;top:449.00px;width:1812.20px;height:1.00px;background:#e8eaef"></div>
<svg class="r" style="left:14px;top:432.50px" width="14" height="12" viewBox="0 0 14 12"><path d="M1.3 1.4 H8.6" stroke="#b5b5b5" stroke-width="1" fill="none"/><path d="M0.9 1 V10.3 H9.3 V7.6" stroke="#3a3a3a" stroke-width="1" fill="none"/><path d="M6.3 7.1 L11.5 2.3" stroke="#222" stroke-width="2.7"/><path d="M6.7 6.7 L11.1 2.7" stroke="#d4d4d4" stroke-width="0.8"/><path d="M4.9 8.7 L5.3 6.1 L7.4 8.2 Z" fill="#222"/></svg>
<svg class="r" style="left:37px;top:432.50px" width="12" height="13" viewBox="0 0 12 13"><path d="M0.9 3.2 H10.8" stroke="#1e1e1e" stroke-width="1.3"/><path d="M4.1 2.8 C4.1 1.3 7.6 1.3 7.6 2.8" stroke="#333" stroke-width="1.1" fill="none"/><rect x="2.2" y="3.4" width="7.3" height="7.9" rx="0.6" fill="#1e1e1e"/><path d="M3.85 4.6 V10.2 M5.85 4.6 V10.2 M7.85 4.6 V10.2" stroke="#a8a8a8" stroke-width="0.9"/></svg>
<div class="t" style="left:59.20px;top:433.67px;font-size:11.3px;font-weight:400;color:#212529;letter-spacing:0.36px">561SUEPPE25A</div>
<div class="t" style="left:167.00px;top:433.67px;font-size:11.3px;font-weight:400;color:#212529;letter-spacing:0.3px">Branch Panel(1,3,5)</div>
<div class="t" style="left:517.30px;top:433.67px;font-size:11.3px;font-weight:400;color:#212529;letter-spacing:0.36px">08</div>
<div class="t" style="left:590.40px;top:433.67px;font-size:11.3px;font-weight:400;color:#212529;letter-spacing:0.36px">A</div>
<div class="t" style="left:657.80px;top:433.67px;font-size:11.3px;font-weight:400;color:#212529;letter-spacing:0.36px">250</div>
<div class="t" style="left:775.20px;top:433.67px;font-size:11.3px;font-weight:400;color:#212529;letter-spacing:0.36px">85.5</div>
<div class="t" style="left:864.90px;top:433.67px;font-size:11.3px;font-weight:400;color:#212529;letter-spacing:0.36px">561SUEDPE24B</div>
<div class="t" style="left:991.20px;top:433.67px;font-size:11.3px;font-weight:400;color:#212529;letter-spacing:0.36px">561SUEDPE24B</div>
<div class="t" style="left:1229.20px;top:433.67px;font-size:11.3px;font-weight:400;color:#212529;letter-spacing:0.36px">South Fab</div>
<div class="t" style="left:1454.50px;top:433.67px;font-size:11.3px;font-weight:400;color:#212529;letter-spacing:0.36px">Existing (Do not relocate); gNum 25; gLet E; brkType C60H</div>
<div class="t" style="left:1823.70px;top:433.67px;font-size:11.3px;font-weight:400;color:#212529;letter-spacing:0.36px">6</div>
<div class="r" style="left:14.00px;top:470.00px;width:1812.20px;height:1.00px;background:#e8eaef"></div>
<svg class="r" style="left:14px;top:453.32px" width="14" height="12" viewBox="0 0 14 12"><path d="M1.3 1.4 H8.6" stroke="#b5b5b5" stroke-width="1" fill="none"/><path d="M0.9 1 V10.3 H9.3 V7.6" stroke="#3a3a3a" stroke-width="1" fill="none"/><path d="M6.3 7.1 L11.5 2.3" stroke="#222" stroke-width="2.7"/><path d="M6.7 6.7 L11.1 2.7" stroke="#d4d4d4" stroke-width="0.8"/><path d="M4.9 8.7 L5.3 6.1 L7.4 8.2 Z" fill="#222"/></svg>
<svg class="r" style="left:37px;top:453.32px" width="12" height="13" viewBox="0 0 12 13"><path d="M0.9 3.2 H10.8" stroke="#1e1e1e" stroke-width="1.3"/><path d="M4.1 2.8 C4.1 1.3 7.6 1.3 7.6 2.8" stroke="#333" stroke-width="1.1" fill="none"/><rect x="2.2" y="3.4" width="7.3" height="7.9" rx="0.6" fill="#1e1e1e"/><path d="M3.85 4.6 V10.2 M5.85 4.6 V10.2 M7.85 4.6 V10.2" stroke="#a8a8a8" stroke-width="0.9"/></svg>
<div class="t" style="left:59.20px;top:454.49px;font-size:11.3px;font-weight:400;color:#212529;letter-spacing:0.36px">561SUEPPE25B</div>
<div class="t" style="left:167.00px;top:454.49px;font-size:11.3px;font-weight:400;color:#212529;letter-spacing:0.3px">Branch Panel(1,3,5)</div>
<div class="t" style="left:517.30px;top:454.49px;font-size:11.3px;font-weight:400;color:#212529;letter-spacing:0.36px">08</div>
<div class="t" style="left:590.40px;top:454.49px;font-size:11.3px;font-weight:400;color:#212529;letter-spacing:0.36px">A</div>
<div class="t" style="left:657.80px;top:454.49px;font-size:11.3px;font-weight:400;color:#212529;letter-spacing:0.36px">250</div>
<div class="t" style="left:775.20px;top:454.49px;font-size:11.3px;font-weight:400;color:#212529;letter-spacing:0.36px">85.5</div>
<div class="t" style="left:864.90px;top:454.49px;font-size:11.3px;font-weight:400;color:#212529;letter-spacing:0.36px">561SUEDPE24B</div>
<div class="t" style="left:991.20px;top:454.49px;font-size:11.3px;font-weight:400;color:#212529;letter-spacing:0.36px">561SUEDPE24B</div>
<div class="t" style="left:1229.20px;top:454.49px;font-size:11.3px;font-weight:400;color:#212529;letter-spacing:0.36px">South Fab</div>
<div class="t" style="left:1454.50px;top:454.49px;font-size:11.3px;font-weight:400;color:#212529;letter-spacing:0.36px">Existing; gNum 25; gLet E; brkType C60H</div>
<div class="t" style="left:1823.70px;top:454.49px;font-size:11.3px;font-weight:400;color:#212529;letter-spacing:0.36px">3</div>
<div class="r" style="left:14.00px;top:491.00px;width:1812.20px;height:1.00px;background:#e8eaef"></div>
<svg class="r" style="left:14px;top:474.14px" width="14" height="12" viewBox="0 0 14 12"><path d="M1.3 1.4 H8.6" stroke="#b5b5b5" stroke-width="1" fill="none"/><path d="M0.9 1 V10.3 H9.3 V7.6" stroke="#3a3a3a" stroke-width="1" fill="none"/><path d="M6.3 7.1 L11.5 2.3" stroke="#222" stroke-width="2.7"/><path d="M6.7 6.7 L11.1 2.7" stroke="#d4d4d4" stroke-width="0.8"/><path d="M4.9 8.7 L5.3 6.1 L7.4 8.2 Z" fill="#222"/></svg>
<svg class="r" style="left:37px;top:474.14px" width="12" height="13" viewBox="0 0 12 13"><path d="M0.9 3.2 H10.8" stroke="#1e1e1e" stroke-width="1.3"/><path d="M4.1 2.8 C4.1 1.3 7.6 1.3 7.6 2.8" stroke="#333" stroke-width="1.1" fill="none"/><rect x="2.2" y="3.4" width="7.3" height="7.9" rx="0.6" fill="#1e1e1e"/><path d="M3.85 4.6 V10.2 M5.85 4.6 V10.2 M7.85 4.6 V10.2" stroke="#a8a8a8" stroke-width="0.9"/></svg>
<div class="t" style="left:59.20px;top:475.31px;font-size:11.3px;font-weight:400;color:#212529;letter-spacing:0.36px">561SUEPPG18A</div>
<div class="t" style="left:167.00px;top:475.31px;font-size:11.3px;font-weight:400;color:#212529;letter-spacing:0.3px">Branch Panel(1,3,5)</div>
<div class="t" style="left:517.30px;top:475.31px;font-size:11.3px;font-weight:400;color:#212529;letter-spacing:0.36px">08</div>
<div class="t" style="left:590.40px;top:475.31px;font-size:11.3px;font-weight:400;color:#212529;letter-spacing:0.36px">C</div>
<div class="t" style="left:657.80px;top:475.31px;font-size:11.3px;font-weight:400;color:#212529;letter-spacing:0.36px">250</div>
<div class="t" style="left:775.20px;top:475.31px;font-size:11.3px;font-weight:400;color:#212529;letter-spacing:0.36px">75</div>
<div class="t" style="left:864.90px;top:475.31px;font-size:11.3px;font-weight:400;color:#212529;letter-spacing:0.36px">571UEDPK18A</div>
<div class="t" style="left:991.20px;top:475.31px;font-size:11.3px;font-weight:400;color:#212529;letter-spacing:0.36px">571UEDPK18A</div>
<div class="t" style="left:1229.20px;top:475.31px;font-size:11.3px;font-weight:400;color:#212529;letter-spacing:0.36px">North Fab</div>
<div class="t" style="left:1454.50px;top:475.31px;font-size:11.3px;font-weight:400;color:#212529;letter-spacing:0.36px">Existing (Do not relocate); gNum 18; gLet G; brkType C60H</div>
<div class="t" style="left:1823.70px;top:475.31px;font-size:11.3px;font-weight:400;color:#212529;letter-spacing:0.36px">4</div>
<div class="r" style="left:14.00px;top:511.00px;width:1812.20px;height:1.00px;background:#e8eaef"></div>
<svg class="r" style="left:14px;top:494.96px" width="14" height="12" viewBox="0 0 14 12"><path d="M1.3 1.4 H8.6" stroke="#b5b5b5" stroke-width="1" fill="none"/><path d="M0.9 1 V10.3 H9.3 V7.6" stroke="#3a3a3a" stroke-width="1" fill="none"/><path d="M6.3 7.1 L11.5 2.3" stroke="#222" stroke-width="2.7"/><path d="M6.7 6.7 L11.1 2.7" stroke="#d4d4d4" stroke-width="0.8"/><path d="M4.9 8.7 L5.3 6.1 L7.4 8.2 Z" fill="#222"/></svg>
<svg class="r" style="left:37px;top:494.96px" width="12" height="13" viewBox="0 0 12 13"><path d="M0.9 3.2 H10.8" stroke="#1e1e1e" stroke-width="1.3"/><path d="M4.1 2.8 C4.1 1.3 7.6 1.3 7.6 2.8" stroke="#333" stroke-width="1.1" fill="none"/><rect x="2.2" y="3.4" width="7.3" height="7.9" rx="0.6" fill="#1e1e1e"/><path d="M3.85 4.6 V10.2 M5.85 4.6 V10.2 M7.85 4.6 V10.2" stroke="#a8a8a8" stroke-width="0.9"/></svg>
<div class="t" style="left:59.20px;top:496.13px;font-size:11.3px;font-weight:400;color:#212529;letter-spacing:0.36px">561UEDPD18A</div>
<div class="t" style="left:167.00px;top:496.13px;font-size:11.3px;font-weight:400;color:#212529;letter-spacing:-0.05px">IRL Existing(C,E,G) ISO</div>
<div class="t" style="left:517.30px;top:496.13px;font-size:11.3px;font-weight:400;color:#212529;letter-spacing:0.36px">00</div>
<div class="t" style="left:590.40px;top:496.13px;font-size:11.3px;font-weight:400;color:#212529;letter-spacing:0.36px">A</div>
<div class="t" style="left:657.80px;top:496.13px;font-size:11.3px;font-weight:400;color:#212529;letter-spacing:0.36px">1250</div>
<div class="t" style="left:775.20px;top:496.13px;font-size:11.3px;font-weight:400;color:#212529;letter-spacing:0.36px">821.8</div>
<div class="t" style="left:991.20px;top:496.13px;font-size:11.3px;font-weight:400;color:#212529;letter-spacing:0.36px">561UEDPD18A</div>
<div class="t" style="left:1229.20px;top:496.13px;font-size:11.3px;font-weight:400;color:#212529;letter-spacing:0.36px">North Fab</div>
<div class="t" style="left:1454.50px;top:496.13px;font-size:11.3px;font-weight:400;color:#212529;letter-spacing:0.36px">Existing; gNum 18; gLet D; brkType ISOMAX</div>
<div class="t" style="left:1823.70px;top:496.13px;font-size:11.3px;font-weight:400;color:#212529;letter-spacing:0.36px">9</div>
<div class="r" style="left:14.00px;top:532.00px;width:1812.20px;height:1.00px;background:#e8eaef"></div>
<svg class="r" style="left:14px;top:515.78px" width="14" height="12" viewBox="0 0 14 12"><path d="M1.3 1.4 H8.6" stroke="#b5b5b5" stroke-width="1" fill="none"/><path d="M0.9 1 V10.3 H9.3 V7.6" stroke="#3a3a3a" stroke-width="1" fill="none"/><path d="M6.3 7.1 L11.5 2.3" stroke="#222" stroke-width="2.7"/><path d="M6.7 6.7 L11.1 2.7" stroke="#d4d4d4" stroke-width="0.8"/><path d="M4.9 8.7 L5.3 6.1 L7.4 8.2 Z" fill="#222"/></svg>
<svg class="r" style="left:37px;top:515.78px" width="12" height="13" viewBox="0 0 12 13"><path d="M0.9 3.2 H10.8" stroke="#1e1e1e" stroke-width="1.3"/><path d="M4.1 2.8 C4.1 1.3 7.6 1.3 7.6 2.8" stroke="#333" stroke-width="1.1" fill="none"/><rect x="2.2" y="3.4" width="7.3" height="7.9" rx="0.6" fill="#1e1e1e"/><path d="M3.85 4.6 V10.2 M5.85 4.6 V10.2 M7.85 4.6 V10.2" stroke="#a8a8a8" stroke-width="0.9"/></svg>
<div class="t" style="left:59.20px;top:516.95px;font-size:11.3px;font-weight:400;color:#212529;letter-spacing:0.36px">561UEDPE30B</div>
<div class="t" style="left:167.00px;top:516.95px;font-size:11.3px;font-weight:400;color:#212529;letter-spacing:-0.05px">IRL Existing(C,E,G) ISO</div>
<div class="t" style="left:517.30px;top:516.95px;font-size:11.3px;font-weight:400;color:#212529;letter-spacing:0.36px">00</div>
<div class="t" style="left:590.40px;top:516.95px;font-size:11.3px;font-weight:400;color:#212529;letter-spacing:0.36px">B</div>
<div class="t" style="left:657.80px;top:516.95px;font-size:11.3px;font-weight:400;color:#212529;letter-spacing:0.36px">800</div>
<div class="t" style="left:775.20px;top:516.95px;font-size:11.3px;font-weight:400;color:#212529;letter-spacing:0.36px">525.9</div>
<div class="t" style="left:991.20px;top:516.95px;font-size:11.3px;font-weight:400;color:#212529;letter-spacing:0.36px">561UEDPE30B</div>
<div class="t" style="left:1229.20px;top:516.95px;font-size:11.3px;font-weight:400;color:#212529;letter-spacing:0.36px">South Fab</div>
<div class="t" style="left:1454.50px;top:516.95px;font-size:11.3px;font-weight:400;color:#212529;letter-spacing:0.36px">Existing; gNum 30; gLet E; brkType ISOMAX</div>
<div class="t" style="left:1823.70px;top:516.95px;font-size:11.3px;font-weight:400;color:#212529;letter-spacing:0.36px">2</div>
<div class="r" style="left:14.00px;top:553.00px;width:1812.20px;height:1.00px;background:#e8eaef"></div>
<svg class="r" style="left:14px;top:536.60px" width="14" height="12" viewBox="0 0 14 12"><path d="M1.3 1.4 H8.6" stroke="#b5b5b5" stroke-width="1" fill="none"/><path d="M0.9 1 V10.3 H9.3 V7.6" stroke="#3a3a3a" stroke-width="1" fill="none"/><path d="M6.3 7.1 L11.5 2.3" stroke="#222" stroke-width="2.7"/><path d="M6.7 6.7 L11.1 2.7" stroke="#d4d4d4" stroke-width="0.8"/><path d="M4.9 8.7 L5.3 6.1 L7.4 8.2 Z" fill="#222"/></svg>
<svg class="r" style="left:37px;top:536.60px" width="12" height="13" viewBox="0 0 12 13"><path d="M0.9 3.2 H10.8" stroke="#1e1e1e" stroke-width="1.3"/><path d="M4.1 2.8 C4.1 1.3 7.6 1.3 7.6 2.8" stroke="#333" stroke-width="1.1" fill="none"/><rect x="2.2" y="3.4" width="7.3" height="7.9" rx="0.6" fill="#1e1e1e"/><path d="M3.85 4.6 V10.2 M5.85 4.6 V10.2 M7.85 4.6 V10.2" stroke="#a8a8a8" stroke-width="0.9"/></svg>
<div class="t" style="left:59.20px;top:537.77px;font-size:11.3px;font-weight:400;color:#212529;letter-spacing:0.36px">561UEDPH24B</div>
<div class="t" style="left:167.00px;top:537.77px;font-size:11.3px;font-weight:400;color:#212529;letter-spacing:-0.05px">IRL Existing(C,E,G) ISO</div>
<div class="t" style="left:517.30px;top:537.77px;font-size:11.3px;font-weight:400;color:#212529;letter-spacing:0.36px">00</div>
<div class="t" style="left:590.40px;top:537.77px;font-size:11.3px;font-weight:400;color:#212529;letter-spacing:0.36px">A</div>
<div class="t" style="left:657.80px;top:537.77px;font-size:11.3px;font-weight:400;color:#212529;letter-spacing:0.36px">1250</div>
<div class="t" style="left:775.20px;top:537.77px;font-size:11.3px;font-weight:400;color:#212529;letter-spacing:0.36px">821.8</div>
<div class="t" style="left:991.20px;top:537.77px;font-size:11.3px;font-weight:400;color:#212529;letter-spacing:0.36px">561UEDPH24B</div>
<div class="t" style="left:1229.20px;top:537.77px;font-size:11.3px;font-weight:400;color:#212529;letter-spacing:0.36px">South Fab</div>
<div class="t" style="left:1454.50px;top:537.77px;font-size:11.3px;font-weight:400;color:#212529;letter-spacing:0.36px">Existing; 602EB; gNum 24; gLet H; brkType ISOMAX</div>
<div class="t" style="left:1823.70px;top:537.77px;font-size:11.3px;font-weight:400;color:#212529;letter-spacing:0.36px">2</div>
<div class="r" style="left:14.00px;top:574.00px;width:1812.20px;height:1.00px;background:#e8eaef"></div>
<svg class="r" style="left:14px;top:557.42px" width="14" height="12" viewBox="0 0 14 12"><path d="M1.3 1.4 H8.6" stroke="#b5b5b5" stroke-width="1" fill="none"/><path d="M0.9 1 V10.3 H9.3 V7.6" stroke="#3a3a3a" stroke-width="1" fill="none"/><path d="M6.3 7.1 L11.5 2.3" stroke="#222" stroke-width="2.7"/><path d="M6.7 6.7 L11.1 2.7" stroke="#d4d4d4" stroke-width="0.8"/><path d="M4.9 8.7 L5.3 6.1 L7.4 8.2 Z" fill="#222"/></svg>
<svg class="r" style="left:37px;top:557.42px" width="12" height="13" viewBox="0 0 12 13"><path d="M0.9 3.2 H10.8" stroke="#1e1e1e" stroke-width="1.3"/><path d="M4.1 2.8 C4.1 1.3 7.6 1.3 7.6 2.8" stroke="#333" stroke-width="1.1" fill="none"/><rect x="2.2" y="3.4" width="7.3" height="7.9" rx="0.6" fill="#1e1e1e"/><path d="M3.85 4.6 V10.2 M5.85 4.6 V10.2 M7.85 4.6 V10.2" stroke="#a8a8a8" stroke-width="0.9"/></svg>
<div class="t" style="left:59.20px;top:558.59px;font-size:11.3px;font-weight:400;color:#212529;letter-spacing:0.36px">561UEPPG18A</div>
<div class="t" style="left:167.00px;top:558.59px;font-size:11.3px;font-weight:400;color:#212529;letter-spacing:0.3px">Branch Panel(1,3,5)</div>
<div class="t" style="left:517.30px;top:558.59px;font-size:11.3px;font-weight:400;color:#212529;letter-spacing:0.36px">00</div>
<div class="t" style="left:590.40px;top:558.59px;font-size:11.3px;font-weight:400;color:#212529;letter-spacing:0.36px">A</div>
<div class="t" style="left:657.80px;top:558.59px;font-size:11.3px;font-weight:400;color:#212529;letter-spacing:0.36px">250</div>
<div class="t" style="left:775.20px;top:558.59px;font-size:11.3px;font-weight:400;color:#212529;letter-spacing:0.36px">164.4</div>
<div class="t" style="left:864.90px;top:558.59px;font-size:11.3px;font-weight:400;color:#212529;letter-spacing:0.36px">561UEDPD18A</div>
<div class="t" style="left:991.20px;top:558.59px;font-size:11.3px;font-weight:400;color:#212529;letter-spacing:0.36px">561UEDPD18A</div>
<div class="t" style="left:1229.20px;top:558.59px;font-size:11.3px;font-weight:400;color:#212529;letter-spacing:0.36px">North Fab</div>
<div class="t" style="left:1454.50px;top:558.59px;font-size:11.3px;font-weight:400;color:#212529;letter-spacing:0.36px">Existing; gNum 18; gLet G; brkType C60H</div>
<div class="r" style="left:14.00px;top:594.00px;width:1812.20px;height:1.00px;background:#e8eaef"></div>
<svg class="r" style="left:14px;top:578.24px" width="14" height="12" viewBox="0 0 14 12"><path d="M1.3 1.4 H8.6" stroke="#b5b5b5" stroke-width="1" fill="none"/><path d="M0.9 1 V10.3 H9.3 V7.6" stroke="#3a3a3a" stroke-width="1" fill="none"/><path d="M6.3 7.1 L11.5 2.3" stroke="#222" stroke-width="2.7"/><path d="M6.7 6.7 L11.1 2.7" stroke="#d4d4d4" stroke-width="0.8"/><path d="M4.9 8.7 L5.3 6.1 L7.4 8.2 Z" fill="#222"/></svg>
<svg class="r" style="left:37px;top:578.24px" width="12" height="13" viewBox="0 0 12 13"><path d="M0.9 3.2 H10.8" stroke="#1e1e1e" stroke-width="1.3"/><path d="M4.1 2.8 C4.1 1.3 7.6 1.3 7.6 2.8" stroke="#333" stroke-width="1.1" fill="none"/><rect x="2.2" y="3.4" width="7.3" height="7.9" rx="0.6" fill="#1e1e1e"/><path d="M3.85 4.6 V10.2 M5.85 4.6 V10.2 M7.85 4.6 V10.2" stroke="#a8a8a8" stroke-width="0.9"/></svg>
<div class="t" style="left:59.20px;top:579.41px;font-size:11.3px;font-weight:400;color:#212529;letter-spacing:0.36px">561UEPPH19A</div>
<div class="t" style="left:167.00px;top:579.41px;font-size:11.3px;font-weight:400;color:#212529;letter-spacing:0.3px">Branch Panel(1,3,5)</div>
<div class="t" style="left:517.30px;top:579.41px;font-size:11.3px;font-weight:400;color:#212529;letter-spacing:0.36px">00</div>
<div class="t" style="left:590.40px;top:579.41px;font-size:11.3px;font-weight:400;color:#212529;letter-spacing:0.36px">A</div>
<div class="t" style="left:657.80px;top:579.41px;font-size:11.3px;font-weight:400;color:#212529;letter-spacing:0.36px">250</div>
<div class="t" style="left:775.20px;top:579.41px;font-size:11.3px;font-weight:400;color:#212529;letter-spacing:0.36px">164.4</div>
<div class="t" style="left:864.90px;top:579.41px;font-size:11.3px;font-weight:400;color:#212529;letter-spacing:0.36px">561UEDPD18A</div>
<div class="t" style="left:991.20px;top:579.41px;font-size:11.3px;font-weight:400;color:#212529;letter-spacing:0.36px">561UEDPD18A</div>
<div class="t" style="left:1229.20px;top:579.41px;font-size:11.3px;font-weight:400;color:#212529;letter-spacing:0.36px">North Fab</div>
<div class="t" style="left:1454.50px;top:579.41px;font-size:11.3px;font-weight:400;color:#212529;letter-spacing:0.36px">Existing (Do not relocate); gNum 19; gLet H; brkType C60H</div>
<div class="t" style="left:1823.70px;top:579.41px;font-size:11.3px;font-weight:400;color:#212529;letter-spacing:0.36px">8</div>
<div class="r" style="left:14.00px;top:615.00px;width:1812.20px;height:1.00px;background:#e8eaef"></div>
<svg class="r" style="left:14px;top:599.06px" width="14" height="12" viewBox="0 0 14 12"><path d="M1.3 1.4 H8.6" stroke="#b5b5b5" stroke-width="1" fill="none"/><path d="M0.9 1 V10.3 H9.3 V7.6" stroke="#3a3a3a" stroke-width="1" fill="none"/><path d="M6.3 7.1 L11.5 2.3" stroke="#222" stroke-width="2.7"/><path d="M6.7 6.7 L11.1 2.7" stroke="#d4d4d4" stroke-width="0.8"/><path d="M4.9 8.7 L5.3 6.1 L7.4 8.2 Z" fill="#222"/></svg>
<svg class="r" style="left:37px;top:599.06px" width="12" height="13" viewBox="0 0 12 13"><path d="M0.9 3.2 H10.8" stroke="#1e1e1e" stroke-width="1.3"/><path d="M4.1 2.8 C4.1 1.3 7.6 1.3 7.6 2.8" stroke="#333" stroke-width="1.1" fill="none"/><rect x="2.2" y="3.4" width="7.3" height="7.9" rx="0.6" fill="#1e1e1e"/><path d="M3.85 4.6 V10.2 M5.85 4.6 V10.2 M7.85 4.6 V10.2" stroke="#a8a8a8" stroke-width="0.9"/></svg>
<div class="t" style="left:59.20px;top:600.23px;font-size:11.3px;font-weight:400;color:#212529;letter-spacing:0.36px">561ZDPD18A</div>
<div class="t" style="left:167.00px;top:600.23px;font-size:11.3px;font-weight:400;color:#212529;letter-spacing:-0.05px">IRL Existing(C,E,G) ISO</div>
<div class="t" style="left:517.30px;top:600.23px;font-size:11.3px;font-weight:400;color:#212529;letter-spacing:0.36px">80</div>
<div class="t" style="left:590.40px;top:600.23px;font-size:11.3px;font-weight:400;color:#212529;letter-spacing:0.36px">B</div>
<div class="t" style="left:657.80px;top:600.23px;font-size:11.3px;font-weight:400;color:#212529;letter-spacing:0.36px">800</div>
<div class="t" style="left:775.20px;top:600.23px;font-size:11.3px;font-weight:400;color:#212529;letter-spacing:0.36px">500</div>
<div class="t" style="left:864.90px;top:600.23px;font-size:11.3px;font-weight:400;color:#212529;letter-spacing:0.36px">SUB52B</div>
<div class="t" style="left:991.20px;top:600.23px;font-size:11.3px;font-weight:400;color:#212529;letter-spacing:0.36px">SUB52B</div>
<div class="t" style="left:1229.20px;top:600.23px;font-size:11.3px;font-weight:400;color:#212529;letter-spacing:0.36px">North Fab</div>
<div class="t" style="left:1454.50px;top:600.23px;font-size:11.3px;font-weight:400;color:#212529;letter-spacing:0.36px">Existing; gNum 18; gLet D; brkType ISOMAX</div>
<div class="t" style="left:1823.70px;top:600.23px;font-size:11.3px;font-weight:400;color:#212529;letter-spacing:0.36px">2</div>
<div class="r" style="left:14.00px;top:636.00px;width:1812.20px;height:1.00px;background:#e8eaef"></div>
<svg class="r" style="left:14px;top:619.88px" width="14" height="12" viewBox="0 0 14 12"><path d="M1.3 1.4 H8.6" stroke="#b5b5b5" stroke-width="1" fill="none"/><path d="M0.9 1 V10.3 H9.3 V7.6" stroke="#3a3a3a" stroke-width="1" fill="none"/><path d="M6.3 7.1 L11.5 2.3" stroke="#222" stroke-width="2.7"/><path d="M6.7 6.7 L11.1 2.7" stroke="#d4d4d4" stroke-width="0.8"/><path d="M4.9 8.7 L5.3 6.1 L7.4 8.2 Z" fill="#222"/></svg>
<svg class="r" style="left:37px;top:619.88px" width="12" height="13" viewBox="0 0 12 13"><path d="M0.9 3.2 H10.8" stroke="#1e1e1e" stroke-width="1.3"/><path d="M4.1 2.8 C4.1 1.3 7.6 1.3 7.6 2.8" stroke="#333" stroke-width="1.1" fill="none"/><rect x="2.2" y="3.4" width="7.3" height="7.9" rx="0.6" fill="#1e1e1e"/><path d="M3.85 4.6 V10.2 M5.85 4.6 V10.2 M7.85 4.6 V10.2" stroke="#a8a8a8" stroke-width="0.9"/></svg>
<div class="t" style="left:59.20px;top:621.05px;font-size:11.3px;font-weight:400;color:#212529;letter-spacing:0.36px">561ZDPD18B</div>
<div class="t" style="left:167.00px;top:621.05px;font-size:11.3px;font-weight:400;color:#212529;letter-spacing:-0.05px">IRL Existing (C,E,G) TMAX</div>
<div class="t" style="left:517.30px;top:621.05px;font-size:11.3px;font-weight:400;color:#212529;letter-spacing:0.36px">80</div>
<div class="t" style="left:590.40px;top:621.05px;font-size:11.3px;font-weight:400;color:#212529;letter-spacing:0.36px">B</div>
<div class="t" style="left:657.80px;top:621.05px;font-size:11.3px;font-weight:400;color:#212529;letter-spacing:0.36px">800</div>
<div class="t" style="left:775.20px;top:621.05px;font-size:11.3px;font-weight:400;color:#212529;letter-spacing:0.36px">500</div>
<div class="t" style="left:864.90px;top:621.05px;font-size:11.3px;font-weight:400;color:#212529;letter-spacing:0.36px">SUB52B</div>
<div class="t" style="left:991.20px;top:621.05px;font-size:11.3px;font-weight:400;color:#212529;letter-spacing:0.36px">SUB52B</div>
<div class="t" style="left:1229.20px;top:621.05px;font-size:11.3px;font-weight:400;color:#212529;letter-spacing:0.36px">North Fab</div>
<div class="t" style="left:1454.50px;top:621.05px;font-size:11.3px;font-weight:400;color:#212529;letter-spacing:0.36px">Existing; gNum 18; gLet D; brkType ISOMAX</div>
<div class="t" style="left:1823.70px;top:621.05px;font-size:11.3px;font-weight:400;color:#212529;letter-spacing:0.36px">2</div>
<div class="r" style="left:14.00px;top:657.00px;width:1812.20px;height:1.00px;background:#e8eaef"></div>
<svg class="r" style="left:14px;top:640.70px" width="14" height="12" viewBox="0 0 14 12"><path d="M1.3 1.4 H8.6" stroke="#b5b5b5" stroke-width="1" fill="none"/><path d="M0.9 1 V10.3 H9.3 V7.6" stroke="#3a3a3a" stroke-width="1" fill="none"/><path d="M6.3 7.1 L11.5 2.3" stroke="#222" stroke-width="2.7"/><path d="M6.7 6.7 L11.1 2.7" stroke="#d4d4d4" stroke-width="0.8"/><path d="M4.9 8.7 L5.3 6.1 L7.4 8.2 Z" fill="#222"/></svg>
<svg class="r" style="left:37px;top:640.70px" width="12" height="13" viewBox="0 0 12 13"><path d="M0.9 3.2 H10.8" stroke="#1e1e1e" stroke-width="1.3"/><path d="M4.1 2.8 C4.1 1.3 7.6 1.3 7.6 2.8" stroke="#333" stroke-width="1.1" fill="none"/><rect x="2.2" y="3.4" width="7.3" height="7.9" rx="0.6" fill="#1e1e1e"/><path d="M3.85 4.6 V10.2 M5.85 4.6 V10.2 M7.85 4.6 V10.2" stroke="#a8a8a8" stroke-width="0.9"/></svg>
<div class="t" style="left:59.20px;top:641.87px;font-size:11.3px;font-weight:400;color:#212529;letter-spacing:0.36px">561ZDPD29B</div>
<div class="t" style="left:167.00px;top:641.87px;font-size:11.3px;font-weight:400;color:#212529;letter-spacing:-0.05px">IRL Existing (C,E,G) TMAX</div>
<div class="t" style="left:517.30px;top:641.87px;font-size:11.3px;font-weight:400;color:#212529;letter-spacing:0.36px">80</div>
<div class="t" style="left:590.40px;top:641.87px;font-size:11.3px;font-weight:400;color:#212529;letter-spacing:0.36px">A</div>
<div class="t" style="left:657.80px;top:641.87px;font-size:11.3px;font-weight:400;color:#212529;letter-spacing:0.36px">1250</div>
<div class="t" style="left:775.20px;top:641.87px;font-size:11.3px;font-weight:400;color:#212529;letter-spacing:0.36px">986.1</div>
<div class="t" style="left:864.90px;top:641.87px;font-size:11.3px;font-weight:400;color:#212529;letter-spacing:0.36px">Sub63A</div>
<div class="t" style="left:991.20px;top:641.87px;font-size:11.3px;font-weight:400;color:#212529;letter-spacing:0.36px">Sub63A</div>
<div class="t" style="left:1229.20px;top:641.87px;font-size:11.3px;font-weight:400;color:#212529;letter-spacing:0.36px">South Fab</div>
<div class="t" style="left:1454.50px;top:641.87px;font-size:11.3px;font-weight:400;color:#212529;letter-spacing:0.36px">New; 601WB; gNum 29; gLet D; brkType TMAX</div>
<div class="t" style="left:1823.70px;top:641.87px;font-size:11.3px;font-weight:400;color:#212529;letter-spacing:0.36px">3</div>
<div class="r" style="left:14.00px;top:678.00px;width:1812.20px;height:1.00px;background:#e8eaef"></div>
<svg class="r" style="left:14px;top:661.52px" width="14" height="12" viewBox="0 0 14 12"><path d="M1.3 1.4 H8.6" stroke="#b5b5b5" stroke-width="1" fill="none"/><path d="M0.9 1 V10.3 H9.3 V7.6" stroke="#3a3a3a" stroke-width="1" fill="none"/><path d="M6.3 7.1 L11.5 2.3" stroke="#222" stroke-width="2.7"/><path d="M6.7 6.7 L11.1 2.7" stroke="#d4d4d4" stroke-width="0.8"/><path d="M4.9 8.7 L5.3 6.1 L7.4 8.2 Z" fill="#222"/></svg>
<svg class="r" style="left:37px;top:661.52px" width="12" height="13" viewBox="0 0 12 13"><path d="M0.9 3.2 H10.8" stroke="#1e1e1e" stroke-width="1.3"/><path d="M4.1 2.8 C4.1 1.3 7.6 1.3 7.6 2.8" stroke="#333" stroke-width="1.1" fill="none"/><rect x="2.2" y="3.4" width="7.3" height="7.9" rx="0.6" fill="#1e1e1e"/><path d="M3.85 4.6 V10.2 M5.85 4.6 V10.2 M7.85 4.6 V10.2" stroke="#a8a8a8" stroke-width="0.9"/></svg>
<div class="t" style="left:59.20px;top:662.69px;font-size:11.3px;font-weight:400;color:#212529;letter-spacing:0.36px">561ZDPE18A</div>
<div class="t" style="left:167.00px;top:662.69px;font-size:11.3px;font-weight:400;color:#212529;letter-spacing:-0.05px">IRL Existing(C,E,G) ISO</div>
<div class="t" style="left:517.30px;top:662.69px;font-size:11.3px;font-weight:400;color:#212529;letter-spacing:0.36px">80</div>
<div class="t" style="left:590.40px;top:662.69px;font-size:11.3px;font-weight:400;color:#212529;letter-spacing:0.36px">A</div>
<div class="t" style="left:657.80px;top:662.69px;font-size:11.3px;font-weight:400;color:#212529;letter-spacing:0.36px">800</div>
<div class="t" style="left:775.20px;top:662.69px;font-size:11.3px;font-weight:400;color:#212529;letter-spacing:0.36px">500</div>
<div class="t" style="left:864.90px;top:662.69px;font-size:11.3px;font-weight:400;color:#212529;letter-spacing:0.36px">SUB52A</div>
<div class="t" style="left:991.20px;top:662.69px;font-size:11.3px;font-weight:400;color:#212529;letter-spacing:0.36px">SUB52A</div>
<div class="t" style="left:1229.20px;top:662.69px;font-size:11.3px;font-weight:400;color:#212529;letter-spacing:0.36px">North Fab</div>
<div class="t" style="left:1454.50px;top:662.69px;font-size:11.3px;font-weight:400;color:#212529;letter-spacing:0.36px">Existing; gNum 18; gLet E; brkType ISOMAX</div>
<div class="t" style="left:1823.70px;top:662.69px;font-size:11.3px;font-weight:400;color:#212529;letter-spacing:0.36px">2</div>
</div>
<div class="r" style="left:1826.20px;top:221.00px;width:16.50px;height:458.00px;background:#f1f1f1"></div>
<div class="r" style="left:1828.00px;top:238.00px;width:12.90px;height:441.00px;background:#c1c1c1"></div>
<svg class="r" style="left:1830px;top:226px" width="10" height="7"><path d="M1 5.9 L4.3 1.7 L8.1 5.9 Z" fill="#a3a3a3"/></svg>
<div class="r" style="left:308.4px;top:216.4px;width:208px;height:455.2px;background:#fff;border:1px solid #e3e5e8;box-sizing:border-box;border-radius:3px;box-shadow:0 2px 5px rgba(0,0,0,.10)"></div>
<div class="t" style="left:344.80px;top:231.74px;font-size:12px;font-weight:400;color:#333;">Filter</div>
<svg class="r" style="left:322px;top:233px" width="12" height="12"><path d="M0.8 0.4 H11.2 L7 5.4 L7 11.6 L5.2 12 L5.2 5.4 Z" fill="#212529"/></svg>
<svg class="r" style="left:322px;top:581.5px" width="12" height="13"><path d="M1.85 0.5 V12.3 M5.4 0.5 V12.3 M9.1 0.5 V12.3" stroke="#15181c" stroke-width="1.9"/></svg>
<svg class="r" style="left:323px;top:614px" width="9" height="11"><path d="M4.5 3 V9.8" stroke="#222" stroke-width="1"/><path d="M1.8 4 L4.5 1 L7.2 4 Z" fill="#222"/></svg>
<svg class="r" style="left:323px;top:644px" width="9" height="11"><path d="M4.5 0.8 V7.5" stroke="#222" stroke-width="1"/><path d="M1.8 6.6 L4.5 9.8 L7.2 6.6 Z" fill="#222"/></svg>
<div class="r" style="left:321.10px;top:271.20px;width:182.80px;height:28.30px;background:#e5e7ea;border-radius:3px"></div>
<div class="t" style="left:331.00px;top:279.14px;font-size:12px;font-weight:400;color:#333;">Contains</div>
<div class="r" style="left:321.10px;top:320.40px;width:182.80px;height:26.90px;border:1px solid #dadde1;border-radius:3px;box-sizing:border-box"></div>
<div class="r" style="left:321.10px;top:373.40px;width:71.40px;height:28.30px;background:#e5e7ea;border-radius:3px"></div>
<div class="t" style="left:331.00px;top:380.64px;font-size:12px;font-weight:400;color:#333;">And</div>
<div class="r" style="left:321.10px;top:428.00px;width:182.80px;height:28.30px;background:#e5e7ea;border-radius:3px"></div>
<div class="t" style="left:331.00px;top:435.64px;font-size:12px;font-weight:400;color:#333;">Contains</div>
<div class="r" style="left:321.10px;top:476.00px;width:182.80px;height:28.90px;border:1px solid #dadde1;border-radius:3px;box-sizing:border-box"></div>
<div class="r" style="left:321.10px;top:530.00px;width:81.90px;height:28.70px;background:#e5e7ea;border-radius:3px"></div>
<div class="t" style="left:348.00px;top:537.14px;font-size:12px;font-weight:400;color:#333;">Clear</div>
<div class="r" style="left:422.00px;top:530.00px;width:81.90px;height:28.70px;background:#5b9bd5;border-radius:3px"></div>
<div class="t" style="left:449.00px;top:537.50px;font-size:11.6px;font-weight:700;color:#fff;">Filter</div>
<div class="r" style="left:309.00px;top:571.00px;width:206.50px;height:1.00px;background:#dfe2e6"></div>
<div class="t" style="left:344.70px;top:581.14px;font-size:12px;font-weight:400;color:#333;">Columns</div>
<div class="r" style="left:309.00px;top:603.00px;width:206.50px;height:1.00px;background:#dfe2e6"></div>
<div class="t" style="left:344.90px;top:613.05px;font-size:12.1px;font-weight:400;color:#333;">Sort Ascending</div>
<div class="t" style="left:344.90px;top:643.18px;font-size:11.95px;font-weight:400;color:#333;">Sort Descending</div>
<svg class="r" style="left:486.5px;top:283px" width="8" height="6"><path d="M0.6 0.8 H7.4 L4 5 Z" fill="#222"/></svg>
<svg class="r" style="left:375px;top:385px" width="8" height="6"><path d="M0.6 0.8 H7.4 L4 5 Z" fill="#222"/></svg>
<svg class="r" style="left:486.5px;top:439.5px" width="8" height="6"><path d="M0.6 0.8 H7.4 L4 5 Z" fill="#222"/></svg>
<div class="r" style="left:301.00px;top:179.10px;width:27.80px;height:40.70px;background:#ec1c24"></div>
<div class="r" style="left:309.40px;top:187.00px;width:11.20px;height:24.40px;background:#e9e9e9"></div>
<svg class="r" style="left:311.50px;top:191px" width="6" height="16"><circle cx="3" cy="4.5" r="1.2" fill="#212529"/><circle cx="3" cy="8.6" r="1.2" fill="#212529"/><circle cx="3" cy="12.7" r="1.2" fill="#212529"/></svg>
</body></html>
